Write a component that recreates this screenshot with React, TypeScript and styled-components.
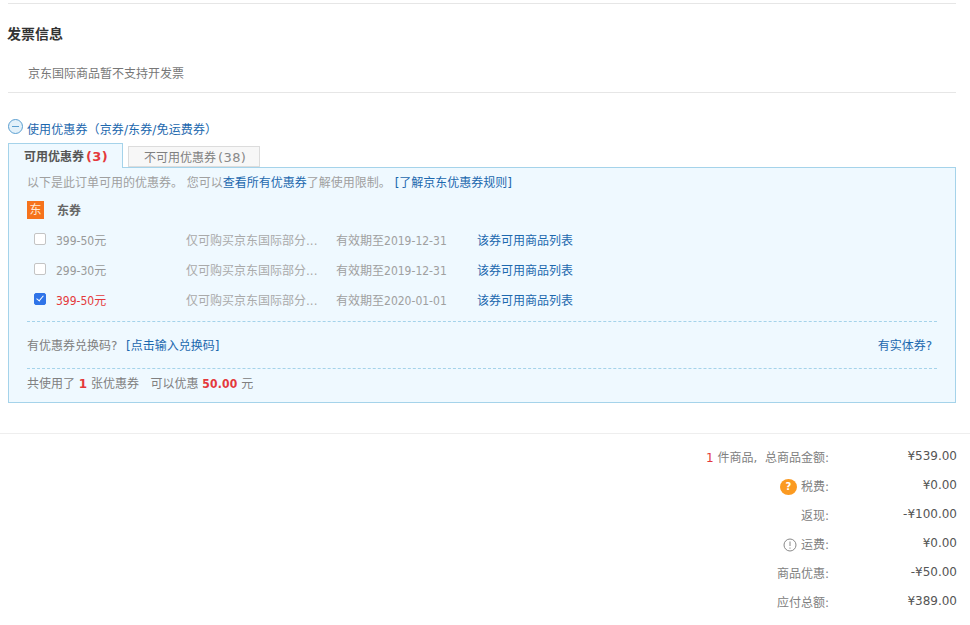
import React from "react";
import styled, { createGlobalStyle } from "styled-components";

const Global = createGlobalStyle`
  html, body { margin: 0; padding: 0; background: #fff; }
  body { font: 12px/18px "DejaVu Sans", "Noto Sans CJK SC", sans-serif; color: #666; }
`;

const Page = styled.div`
  width: 970px;
  height: 625px;
  overflow: hidden;
`;
const Main = styled.div`
  width: 948px;
  margin-left: 8px;
  padding-top: 3px;
`;
const Invoice = styled.section`
  border-top: 1px solid #e6e6e6;
  border-bottom: 1px solid #e6e6e6;
  height: 88px;
`;
const Title = styled.h3`
  margin: 21px 0 0 -1px;
  font-size: 14px;
  line-height: 18px;
  font-weight: 700;
  color: #333;
`;
const InvoiceNote = styled.p`
  margin: 22px 0 0 20px;
  line-height: 18px;
  color: #777;
`;
const Toggle = styled.div`
  display: flex;
  align-items: center;
  gap: 4px;
  margin-top: 25px;
  height: 20px;
  color: #1c68ae;
`;
const ToggleIcon = styled.span`
  display: block;
  width: 15px;
  height: 15px;
  margin-top: -4px;
`;
const ToggleText = styled.span`
  margin-top: 4px;
  letter-spacing: 0.12px;
`;
const Tabs = styled.div`
  display: flex;
  align-items: flex-end;
  height: 25px;
  margin-top: 4px;
`;
const Tab = styled.div<{ $active?: boolean }>`
  box-sizing: border-box;
  display: flex;
  align-items: center;
  position: relative;
  margin-bottom: ${(p) => (p.$active ? "-1px" : "0")};
  width: ${(p) => (p.$active ? "115px" : "132px")};
  height: ${(p) => (p.$active ? "25px" : "21px")};
  margin-left: ${(p) => (p.$active ? "0" : "5px")};
  padding: ${(p) => (p.$active ? "2px 0 0 15px" : "3px 0 0 15px")};
  z-index: ${(p) => (p.$active ? 1 : 0)};
  background: ${(p) => (p.$active ? "#eff9ff" : "#f7f7f7")};
  border: 1px solid ${(p) => (p.$active ? "#a5d3ea" : "#dcdcdc")};
  border-bottom: ${(p) => (p.$active ? "0" : "1px solid #dcdcdc")};
  font-weight: ${(p) => (p.$active ? 700 : 400)};
  color: ${(p) => (p.$active ? "#555" : "#808080")};
  white-space: pre;
`;
const Count = styled.span<{ $red?: boolean }>`
  margin-left: 2px;
  font-size: 13px;
  letter-spacing: 0.4px;
  color: ${(p) => (p.$red ? "#e4393c" : "#888")};
`;
const Panel = styled.div`
  box-sizing: border-box;
  width: 948px;
  height: 236px;
  background: #eff9ff;
  border: 1px solid #a5d3ea;
  padding: 6px 18px 0;
`;
const Hint = styled.p`
  margin: 0;
  line-height: 18px;
  color: #a0a0a0;
  white-space: pre;
`;
const BlueLink = styled.a`
  color: #1c68ae;
  text-decoration: none;
`;
const GroupHead = styled.div`
  display: flex;
  align-items: center;
  margin-top: 9px;
  height: 18px;
  gap: 13px;
  font-weight: 700;
  color: #666;
`;
const GroupName = styled.span`
  margin-top: 2px;
`;
const Badge = styled.span`
  display: flex;
  align-items: center;
  justify-content: center;
  width: 17px;
  height: 18px;
  background: #f6731c;
  color: #ffe9d5;
  font-weight: 400;
`;
const Rows = styled.div`
  margin-top: 7px;
`;
const Row = styled.div`
  display: flex;
  align-items: center;
  height: 30px;
`;
const Check = styled.input`
  appearance: none;
  position: relative;
  box-sizing: border-box;
  width: 12px;
  height: 12px;
  margin: -5px 10px 0 7px;
  background: #fff;
  border: 1px solid #c4c4c4;
  border-radius: 2px;
  &:checked {
    background: #2f74e8;
    border-color: #2f74e8;
  }
  &:checked::after {
    content: "";
    position: absolute;
    left: 3px;
    top: 0.5px;
    width: 3px;
    height: 6px;
    border: solid #fff;
    border-width: 0 1.5px 1.5px 0;
    transform: rotate(40deg);
  }
`;
const Amount = styled.span<{ $on?: boolean }>`
  width: 130px;
  color: ${(p) => (p.$on ? "#e4393c" : "#999")};
`;
const Scope = styled.span`
  width: 150px;
  color: #aaa;
  white-space: nowrap;
`;
const Expiry = styled.span`
  width: 141px;
  color: #a0a0a0;
`;
const Num = styled.span`
  font-family: "DejaVu Sans Condensed", "DejaVu Sans", sans-serif;
  font-stretch: condensed;
`;
const Dashed = styled.div`
  border-top: 1px dashed #a5d3ea;
`;
const ExchangeRow = styled(Dashed)`
  display: flex;
  justify-content: space-between;
  align-items: center;
  box-sizing: border-box;
  height: 47px;
  margin-top: 5px;
  padding: 2px 5px 0 0;
  color: #808080;
  white-space: pre;
`;
const CodeLink = styled(BlueLink)`
  margin-left: 1px;
`;
const TotalRow = styled(Dashed)`
  height: 33px;
  line-height: 30px;
  color: #808080;
  white-space: pre;
`;
const Red = styled.b`
  color: #e4393c;
`;
const RedBig = styled(Red)`
  font-family: "DejaVu Sans Condensed", "DejaVu Sans", sans-serif;
  font-stretch: condensed;
  letter-spacing: 0.2px;
`;
const Summary = styled.section`
  margin-top: 30px;
  border-top: 1px solid #eee;
  padding-top: 9px;
`;
const SumRow = styled.div`
  display: flex;
  justify-content: flex-end;
  align-items: center;
  height: 29px;
  width: 957px;
`;
const SumLabel = styled.span`
  display: flex;
  align-items: center;
  justify-content: flex-end;
  width: 300px;
  margin: 1px 1px 0 0;
  color: #808080;
  white-space: pre;
`;
const SumValue = styled.span`
  width: 127px;
  text-align: right;
  color: #555;
  margin-top: -3px;
`;
const RedNum = styled.span`
  color: #e4393c;
`;
const Help = styled.span`
  display: flex;
  align-items: center;
  justify-content: center;
  width: 17px;
  height: 16px;
  margin-right: 4px;
  border-radius: 50%;
  background: #fb9a21;
  color: #fff;
  font-size: 10px;
  font-weight: 700;
`;
const InfoIcon = styled.svg`
  width: 14px;
  height: 14px;
  margin-right: 4px;
`;

const coupons = [
  { amount: "399-50", expiry: "2019-12-31", on: false },
  { amount: "299-30", expiry: "2019-12-31", on: false },
  { amount: "399-50", expiry: "2020-01-01", on: true },
];

export default function App() {
  return (
    <Page>
      <Global />
      <Main>
        <Invoice>
          <Title>发票信息</Title>
          <InvoiceNote>京东国际商品暂不支持开发票</InvoiceNote>
        </Invoice>
        <Toggle>
          <ToggleIcon>
            <svg width="15" height="15" viewBox="0 0 15 15">
              <circle cx="7.5" cy="7.5" r="7" fill="#e3f1fa" stroke="#5b9fd0" />
              <path d="M4 7.5h7" stroke="#5b9fd0" />
            </svg>
          </ToggleIcon>
          <ToggleText>使用优惠券（京券/东券/免运费券）</ToggleText>
        </Toggle>
        <Tabs>
          <Tab $active>
            可用优惠券<Count $red>(3)</Count>
          </Tab>
          <Tab>
            不可用优惠券<Count>(38)</Count>
          </Tab>
        </Tabs>
        <Panel>
          <Hint>
            以下是此订单可用的优惠券。 您可以<BlueLink>查看所有优惠券</BlueLink>了解使用限制。 <BlueLink>[了解京东优惠券规则]</BlueLink>
          </Hint>
          <GroupHead>
            <Badge>东</Badge>
            <GroupName>东券</GroupName>
          </GroupHead>
          <Rows>
            {coupons.map((c, i) => (
              <Row key={i}>
                <Check type="checkbox" defaultChecked={c.on} />
                <Amount $on={c.on}>
                  <Num>{c.amount}</Num>元
                </Amount>
                <Scope>仅可购买京东国际部分...</Scope>
                <Expiry>
                  有效期至<Num>{c.expiry}</Num>
                </Expiry>
                <BlueLink>该券可用商品列表</BlueLink>
              </Row>
            ))}
          </Rows>
          <ExchangeRow>
            <span>
              有优惠券兑换码?  <CodeLink>[点击输入兑换码]</CodeLink>
            </span>
            <BlueLink>有实体券?</BlueLink>
          </ExchangeRow>
          <TotalRow>
            共使用了 <Red>1</Red> 张优惠券   可以优惠 <RedBig>50.00</RedBig> 元
          </TotalRow>
        </Panel>
      </Main>
      <Summary>
        <SumRow>
          <SumLabel>
            <RedNum>1</RedNum> 件商品,  总商品金额:
          </SumLabel>
          <SumValue>¥539.00</SumValue>
        </SumRow>
        <SumRow>
          <SumLabel>
            <Help>?</Help>税费:
          </SumLabel>
          <SumValue>¥0.00</SumValue>
        </SumRow>
        <SumRow>
          <SumLabel>返现:</SumLabel>
          <SumValue>-¥100.00</SumValue>
        </SumRow>
        <SumRow>
          <SumLabel>
            <InfoIcon viewBox="0 0 14 14">
              <circle cx="7" cy="7" r="6" fill="none" stroke="#888" />
              <path d="M7 3.5v4.5M7 9.5v1.2" stroke="#888" />
            </InfoIcon>
            运费:
          </SumLabel>
          <SumValue>¥0.00</SumValue>
        </SumRow>
        <SumRow>
          <SumLabel>商品优惠:</SumLabel>
          <SumValue>-¥50.00</SumValue>
        </SumRow>
        <SumRow>
          <SumLabel>应付总额:</SumLabel>
          <SumValue>¥389.00</SumValue>
        </SumRow>
      </Summary>
    </Page>
  );
}
